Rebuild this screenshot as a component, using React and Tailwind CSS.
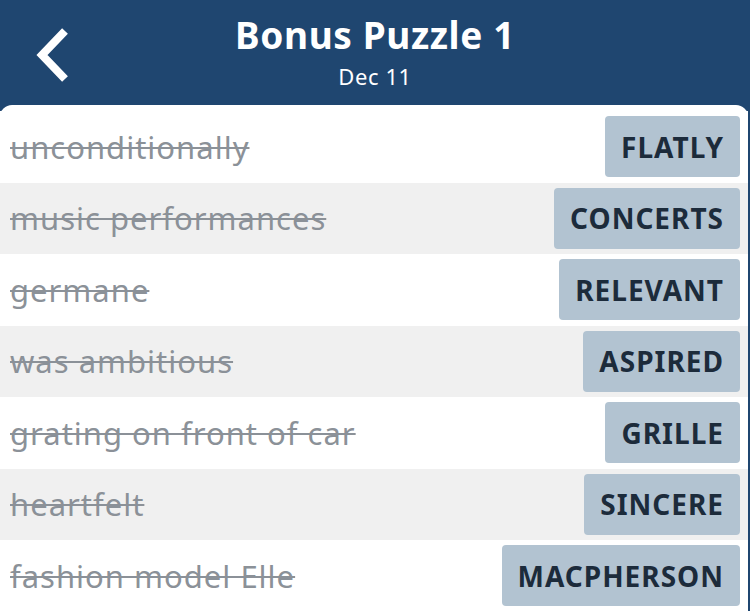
import React from "react";

const rows = [
  ["unconditionally", "FLATLY"],
  ["music performances", "CONCERTS"],
  ["germane", "RELEVANT"],
  ["was ambitious", "ASPIRED"],
  ["grating on front of car", "GRILLE"],
  ["heartfelt", "SINCERE"],
  ["fashion model Elle", "MACPHERSON"],
];

export default function App() {
  return (
    <div
      className="w-[750px] h-[611px] overflow-hidden bg-[#1f4670]"
      style={{ fontFamily: '"Noto Sans", "Open Sans", sans-serif' }}
    >
      <header className="relative h-[105px] flex flex-col items-center text-white">
        <svg
          className="absolute left-[30px] top-[26px]"
          width="44"
          height="58"
          viewBox="0 0 44 58"
        >
          <path
            d="M35 5 L12 29 L35 53"
            fill="none"
            stroke="white"
            strokeWidth="8"
            strokeLinecap="butt"
            strokeLinejoin="miter"
          />
        </svg>
        <div className="mt-[11px] text-[37px] font-bold leading-[48px] tracking-[0.6px]">Bonus Puzzle 1</div>
        <div className="mt-[3px] text-[22px] leading-[28px] tracking-[0.6px]">Dec 11</div>
      </header>
      <main className="bg-white rounded-t-[12px] pt-[6px] mr-[2px] h-[506px]">
        {rows.map(([clue, answer], i) => (
          <div
            key={i}
            className={`h-[71.5px] flex items-center justify-between pl-[10px] pr-[8px] ${
              i % 2 === 1 ? "bg-[#f0f0f0]" : "bg-white"
            }`}
          >
            <span className="text-[31px] tracking-[1px] text-[#8b9198] line-through decoration-[#8b9198] decoration-[1.5px]">
              {clue}
            </span>
            <span className="h-[61px] flex items-center px-[16px] rounded-[4px] bg-[#b2c3d1] text-[#1c2b3b] text-[28px] font-bold tracking-[1px]">
              {answer}
            </span>
          </div>
        ))}
      </main>
    </div>
  );
}
